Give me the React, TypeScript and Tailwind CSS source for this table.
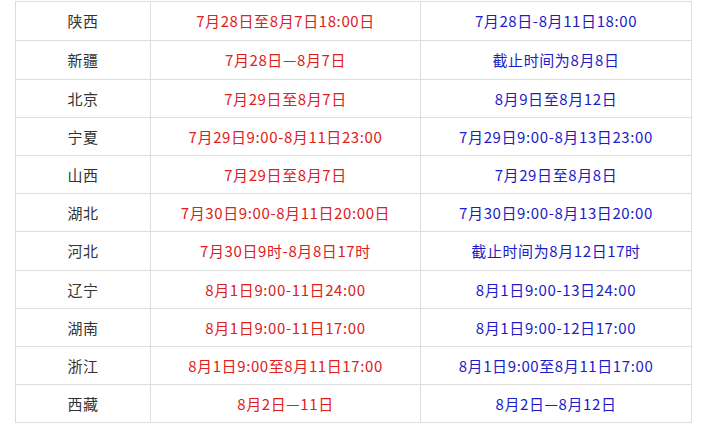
import React from "react";

const rows: { p: string; a: string; b: string; h: string }[] = [
  { p: "陕西", a: "7月28日至8月7日18:00日", b: "7月28日-8月11日18:00", h: "h-[39px]" },
  { p: "新疆", a: "7月28日—8月7日", b: "截止时间为8月8日", h: "h-[39px]" },
  { p: "北京", a: "7月29日至8月7日", b: "8月9日至8月12日", h: "h-[38px]" },
  { p: "宁夏", a: "7月29日9:00-8月11日23:00", b: "7月29日9:00-8月13日23:00", h: "h-[38px]" },
  { p: "山西", a: "7月29日至8月7日", b: "7月29日至8月8日", h: "h-[38px]" },
  { p: "湖北", a: "7月30日9:00-8月11日20:00日", b: "7月30日9:00-8月13日20:00", h: "h-[38px]" },
  { p: "河北", a: "7月30日9时-8月8日17时", b: "截止时间为8月12日17时", h: "h-[39px]" },
  { p: "辽宁", a: "8月1日9:00-11日24:00", b: "8月1日9:00-13日24:00", h: "h-[38px]" },
  { p: "湖南", a: "8月1日9:00-11日17:00", b: "8月1日9:00-12日17:00", h: "h-[38px]" },
  { p: "浙江", a: "8月1日9:00至8月11日17:00", b: "8月1日9:00至8月11日17:00", h: "h-[38px]" },
  { p: "西藏", a: "8月2日—11日", b: "8月2日—8月12日", h: "h-[38px]" },
];

export default function App() {
  return (
    <div
      className="w-[708px] h-[438px] bg-white pt-[1px] pl-[15px] overflow-hidden"
      style={{ fontFamily: '"Noto Sans CJK SC", "Noto Sans", sans-serif' }}
    >
      <div className="w-[677px] border-l border-t border-[#dddddd] text-[15px] leading-none tracking-[0.6px]">
        {rows.map((r) => (
          <div key={r.p} className={`flex ${r.h}`}>
            <div className="w-[135px] shrink-0 border-r border-b border-[#dddddd] flex items-center justify-center pb-[1px] text-[#333333]">
              {r.p}
            </div>
            <div className="w-[270px] shrink-0 border-r border-b border-[#dddddd] flex items-center justify-center pb-[1px] text-[#e0201b]">
              {r.a}
            </div>
            <div className="w-[271px] shrink-0 border-r border-b border-[#dddddd] flex items-center justify-center pb-[1px] text-[#1c1cc8]">
              {r.b}
            </div>
          </div>
        ))}
      </div>
    </div>
  );
}
